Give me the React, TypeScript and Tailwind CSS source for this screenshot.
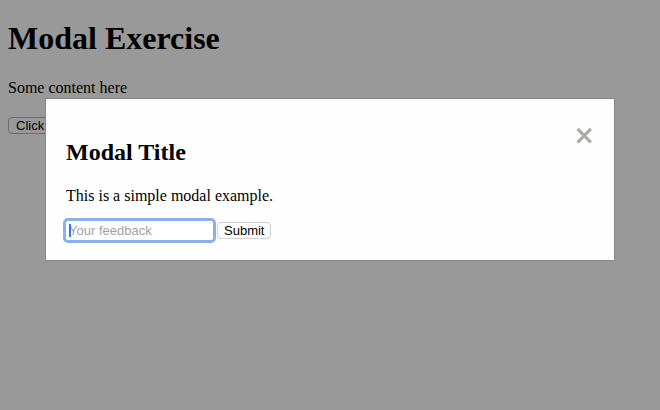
export default function App() {
  return (
    <div className="min-h-screen bg-white p-2 font-['Liberation_Serif','Times_New_Roman',serif] text-base text-black">
      <h1 className="mt-[12px] mb-[21.5px] text-[32px] leading-[37px] font-bold">Modal Exercise</h1>
      <p className="mb-4 leading-[18.4px]">Some content here</p>
      <button className="h-[17px] rounded-[4px] border border-[#b5b5b5] bg-white px-[7px] font-['Liberation_Sans',Arial,sans-serif] text-[13px] leading-[15px]">
        Click Me
      </button>

      {/* Modal overlay */}
      <div className="fixed inset-0 bg-black/40 pt-[98px]">
        <div className="mx-auto w-[570px] border border-[#888] bg-[#fefefe] p-5">
          <span className="float-right -mr-[1px] cursor-pointer font-['DejaVu_Sans',sans-serif] text-[26px] leading-[32px] font-bold text-[#aaa]">×</span>
          <h2 className="mt-[20px] mb-[20px] text-2xl leading-[27.6px] font-bold">Modal Title</h2>
          <p className="mb-4 leading-[18.4px]">This is a simple modal example.</p>
          <div className="flex items-center gap-[4px] font-['Liberation_Sans',Arial,sans-serif] text-[13px]">
            <div className="relative">
              <input
                type="text"
                placeholder="Your feedback"
                className="block h-[19px] w-[147px] rounded-[2px] bg-white px-[3px] text-[13px] leading-[17px] shadow-[0_0_0_3px_#8db0ec] outline-none placeholder:text-[#a2a2a2]"
              />
              <span className="absolute top-[3px] left-[3px] h-[13px] w-[1.5px] bg-[#3a72e0]" />
            </div>
            <button className="h-[17px] rounded-[4px] border border-[#d0d0d0] bg-white px-[6px] text-[13px] leading-[15px] text-black">
              Submit
            </button>
          </div>
        </div>
      </div>
    </div>
  )
}
